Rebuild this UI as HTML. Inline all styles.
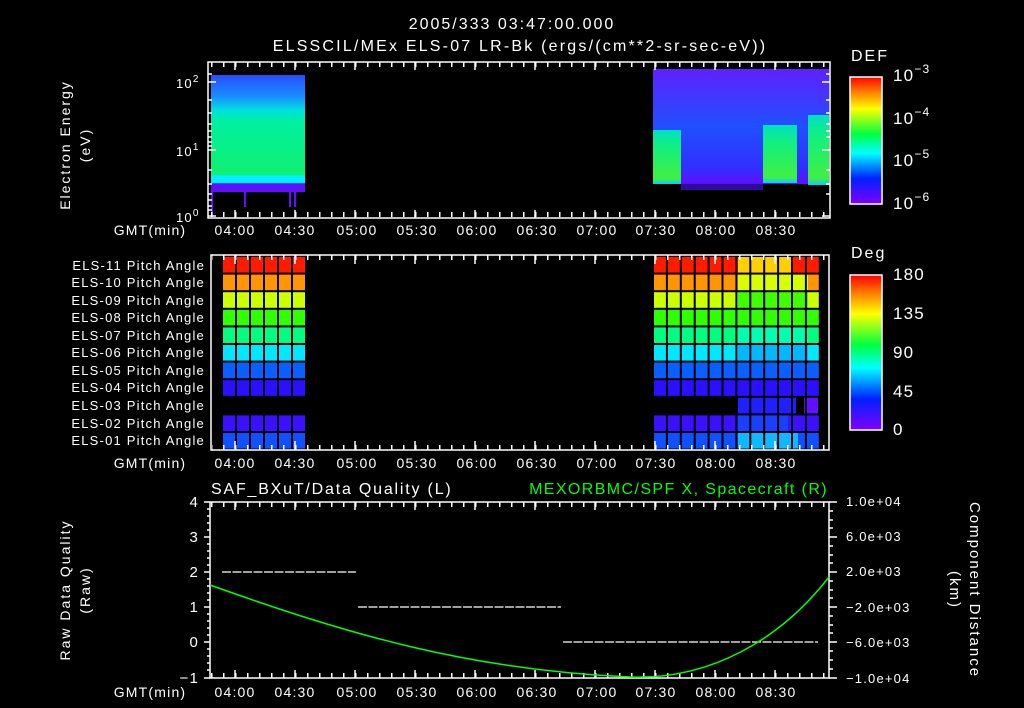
<!DOCTYPE html>
<html><head><meta charset="utf-8"><style>
html,body{margin:0;padding:0;background:#000;width:1024px;height:708px;overflow:hidden}
svg{display:block}
text{font-family:"Liberation Sans","DejaVu Sans",sans-serif;fill:#fff;letter-spacing:1.2px}
</style></head><body>
<svg width="1024" height="708" viewBox="0 0 1024 708" xmlns="http://www.w3.org/2000/svg">
<defs>
<pattern id="mtT" patternUnits="userSpaceOnUse" x="223" y="0" width="12" height="708"><rect x="0" y="0" width="1.5" height="708" fill="#fff"/></pattern>
<pattern id="grid" patternUnits="userSpaceOnUse" x="222" y="256" width="14" height="17.6"><rect width="14" height="17.6" fill="none" stroke="#000" stroke-width="2"/></pattern>
<pattern id="grid2" patternUnits="userSpaceOnUse" x="653" y="256" width="13.9" height="17.6"><rect width="13.9" height="17.6" fill="none" stroke="#000" stroke-width="2"/></pattern>
<linearGradient id="defbar" x1="0" y1="1" x2="0" y2="0">
<stop offset="0" stop-color="#8000ff"/><stop offset="0.2" stop-color="#0020ff"/><stop offset="0.4" stop-color="#00ffff"/><stop offset="0.55" stop-color="#00ff40"/><stop offset="0.75" stop-color="#ffff00"/><stop offset="0.88" stop-color="#ff8000"/><stop offset="1" stop-color="#ff0000"/></linearGradient>
<linearGradient id="lblock" x1="0" y1="0" x2="0" y2="1">
<stop offset="0" stop-color="#2a4cff"/><stop offset="0.18" stop-color="#1a8cff"/><stop offset="0.3" stop-color="#00e0e0"/><stop offset="0.4" stop-color="#00f0a0"/><stop offset="0.85" stop-color="#10f070"/><stop offset="0.86" stop-color="#00f0ff"/><stop offset="0.92" stop-color="#00f0ff"/><stop offset="0.93" stop-color="#6010ff"/><stop offset="1" stop-color="#6010ff"/></linearGradient>
<linearGradient id="rblock" x1="0" y1="0" x2="0" y2="1">
<stop offset="0" stop-color="#6020ff"/><stop offset="0.5" stop-color="#2050ff"/><stop offset="0.85" stop-color="#3030ff"/><stop offset="1" stop-color="#6010ff"/></linearGradient>
<linearGradient id="gchunk" x1="0" y1="0" x2="0" y2="1">
<stop offset="0" stop-color="#00e0c0"/><stop offset="0.3" stop-color="#10f080"/><stop offset="0.9" stop-color="#40f040"/><stop offset="1" stop-color="#00d0ff"/></linearGradient>
</defs>

<!-- Titles -->
<text x="512" y="29" font-size="16" text-anchor="middle" style="letter-spacing:2px">2005/333 03:47:00.000</text>
<text x="520" y="51" font-size="16" text-anchor="middle" style="letter-spacing:2.2px">ELSSCIL/MEx ELS-07 LR-Bk  (ergs/(cm**2-sr-sec-eV))</text>

<!-- Panel 1 -->
<rect x="211" y="75" width="94" height="117" fill="url(#lblock)"/>
<rect x="211" y="192" width="2" height="25" fill="#6010ff"/>
<rect x="244" y="192" width="2" height="15" fill="#6010ff"/>
<rect x="289" y="192" width="2" height="15" fill="#6010ff"/>
<rect x="294" y="192" width="2" height="15" fill="#6010ff"/>
<rect x="653" y="69" width="176" height="115" fill="url(#rblock)"/>
<rect x="653" y="130" width="28" height="54" fill="url(#gchunk)"/>
<rect x="763" y="125" width="34" height="58" fill="url(#gchunk)"/>
<rect x="808" y="115" width="21" height="70" fill="url(#gchunk)"/>
<rect x="681" y="182" width="82" height="8" fill="#5010ff" opacity="0.6"/>
<rect x="208" y="62" width="622" height="156" fill="none" stroke="#fff" stroke-width="1.5"/>
<rect x="209" y="62" width="620" height="5" fill="url(#mtT)"/>
<rect x="209" y="212" width="620" height="5" fill="url(#mtT)"/>
<g stroke="#fff" stroke-width="1.5">
<path d="M208 82h8M208 150h8M208 216h8M830 82h-8M830 150h-8M830 216h-8M208 100h4M208 113h4M208 124h4M208 131h4M208 137h4M208 142h4M208 146h4M208 170h4M208 184h4M208 194h4M208 200h4M208 206h4M208 210h4M208 74h4M830 100h-4M830 113h-4M830 124h-4M830 131h-4M830 137h-4M830 170h-4M830 184h-4M830 194h-4M830 74h-4"/>
<path d="M235 62v8M295 62v8M355 62v8M415 62v8M475 62v8M535 62v8M595 62v8M655 62v8M715 62v8M775 62v8M235 218v-8M295 218v-8M355 218v-8M415 218v-8M475 218v-8M535 218v-8M595 218v-8M655 218v-8M715 218v-8M775 218v-8"/>
</g>
<g style="letter-spacing:0"><text x="176" y="88" font-size="13">10<tspan dy="-6" font-size="10">2</tspan></text>
<text x="176" y="156" font-size="13">10<tspan dy="-6" font-size="10">1</tspan></text>
<text x="176" y="222" font-size="13">10<tspan dy="-6" font-size="10">0</tspan></text></g>
<text transform="translate(70,145) rotate(-90)" font-size="14" text-anchor="middle" style="letter-spacing:2px">Electron Energy</text>
<text transform="translate(90,145) rotate(-90)" font-size="14" text-anchor="middle" style="letter-spacing:2px">(eV)</text>
<g font-size="14" text-anchor="middle" style="letter-spacing:2px">
<text x="150" y="235">GMT(min)</text>
<text x="235" y="235">04:00</text><text x="295" y="235">04:30</text><text x="357" y="235">05:00</text><text x="417" y="235">05:30</text><text x="477" y="235">06:00</text><text x="537" y="235">06:30</text><text x="597" y="235">07:00</text><text x="656" y="235">07:30</text><text x="716" y="235">08:00</text><text x="776" y="235">08:30</text>
</g>
<!-- DEF colorbar -->
<text x="851" y="61" font-size="16" style="letter-spacing:2px">DEF</text>
<rect x="850" y="77" width="32" height="127" fill="url(#defbar)" stroke="#fff" stroke-width="1.5"/>
<g font-size="17" style="letter-spacing:0"><text x="893" y="81">10<tspan dy="-8" font-size="12">−3</tspan></text><text x="893" y="124">10<tspan dy="-8" font-size="12">−4</tspan></text><text x="893" y="166">10<tspan dy="-8" font-size="12">−5</tspan></text><text x="893" y="209">10<tspan dy="-8" font-size="12">−6</tspan></text></g>

<!-- Panel 2 -->
<g>
<rect x="222" y="256" width="84" height="17.6" fill="#ff1a00"/>
<rect x="222" y="273.6" width="84" height="17.6" fill="#ff9500"/>
<rect x="222" y="291.2" width="84" height="17.6" fill="#ccff00"/>
<rect x="222" y="308.8" width="84" height="17.6" fill="#30ff00"/>
<rect x="222" y="326.4" width="84" height="17.6" fill="#00ff80"/>
<rect x="222" y="344" width="84" height="17.6" fill="#00e8ff"/>
<rect x="222" y="361.6" width="84" height="17.6" fill="#0a60ff"/>
<rect x="222" y="379.2" width="84" height="17.6" fill="#2a10ff"/>
<rect x="222" y="414.4" width="84" height="17.6" fill="#3a10ff"/>
<rect x="222" y="432" width="84" height="17.6" fill="#1050ff"/>
<rect x="222" y="256" width="84" height="194" fill="url(#grid)"/>
</g>
<g>
<rect x="653" y="256" width="166" height="17.6" fill="#ff1a00"/>
<rect x="738" y="256" width="55" height="17.6" fill="#ffd000"/>
<rect x="653" y="273.6" width="166" height="17.6" fill="#ff9500"/>
<rect x="738" y="273.6" width="70" height="17.6" fill="#d8ff00"/>
<rect x="653" y="291.2" width="166" height="17.6" fill="#ccff00"/>
<rect x="738" y="291.2" width="70" height="17.6" fill="#40ff00"/>
<rect x="653" y="308.8" width="166" height="17.6" fill="#30ff00"/>
<rect x="653" y="326.4" width="166" height="17.6" fill="#00ff80"/>
<rect x="738" y="326.4" width="70" height="17.6" fill="#00ffb0"/>
<rect x="653" y="344" width="166" height="17.6" fill="#00e8ff"/>
<rect x="738" y="344" width="70" height="17.6" fill="#00b8ff"/>
<rect x="653" y="361.6" width="166" height="17.6" fill="#0a60ff"/>
<rect x="653" y="379.2" width="166" height="17.6" fill="#2a10ff"/>
<rect x="738" y="396.8" width="58" height="17.6" fill="#2020ff"/>
<rect x="804" y="396.8" width="14" height="17.6" fill="#6010ff"/>
<rect x="653" y="414.4" width="166" height="17.6" fill="#3a10ff"/>
<rect x="738" y="414.4" width="50" height="17.6" fill="#1a40ff"/>
<rect x="653" y="432" width="166" height="17.6" fill="#1050ff"/>
<rect x="738" y="432" width="60" height="17.6" fill="#10b8ff"/>
<rect x="653" y="256" width="166" height="194" fill="url(#grid2)"/>
</g>
<rect x="211" y="255" width="618" height="195" fill="none" stroke="#fff" stroke-width="1.5"/>
<rect x="212" y="255" width="616" height="5" fill="url(#mtT)"/>
<rect x="212" y="445" width="616" height="5" fill="url(#mtT)"/>
<g stroke="#fff" stroke-width="1.5"><path d="M235 255v9M295 255v9M355 255v9M415 255v9M475 255v9M535 255v9M595 255v9M655 255v9M715 255v9M775 255v9M235 450v-9M295 450v-9M355 450v-9M415 450v-9M475 450v-9M535 450v-9M595 450v-9M655 450v-9M715 450v-9M775 450v-9"/></g>
<g font-size="13" text-anchor="end" style="letter-spacing:1.6px">
<text x="205" y="270">ELS-11 Pitch Angle</text><text x="205" y="287">ELS-10 Pitch Angle</text><text x="205" y="305">ELS-09 Pitch Angle</text><text x="205" y="322">ELS-08 Pitch Angle</text><text x="205" y="340">ELS-07 Pitch Angle</text><text x="205" y="357">ELS-06 Pitch Angle</text><text x="205" y="375">ELS-05 Pitch Angle</text><text x="205" y="392">ELS-04 Pitch Angle</text><text x="205" y="410">ELS-03 Pitch Angle</text><text x="205" y="428">ELS-02 Pitch Angle</text><text x="205" y="445">ELS-01 Pitch Angle</text>
</g>
<g font-size="14" text-anchor="middle" style="letter-spacing:2px">
<text x="150" y="468">GMT(min)</text>
<text x="235" y="468">04:00</text><text x="295" y="468">04:30</text><text x="357" y="468">05:00</text><text x="417" y="468">05:30</text><text x="477" y="468">06:00</text><text x="537" y="468">06:30</text><text x="597" y="468">07:00</text><text x="656" y="468">07:30</text><text x="716" y="468">08:00</text><text x="776" y="468">08:30</text>
</g>
<text x="851" y="258" font-size="16" style="letter-spacing:2px">Deg</text>
<rect x="850" y="275" width="32" height="155" fill="url(#defbar)" stroke="#fff" stroke-width="1.5"/>
<g font-size="17" style="letter-spacing:1.5px"><text x="893" y="280">180</text><text x="893" y="319">135</text><text x="893" y="358">90</text><text x="893" y="397">45</text><text x="893" y="435">0</text></g>

<!-- Panel 3 -->
<text x="211" y="494" font-size="16" style="letter-spacing:1.8px">SAF_BXuT/Data Quality (L)</text>
<text x="828" y="494" font-size="16" text-anchor="end" style="fill:#00ff00;letter-spacing:1.4px">MEXORBMC/SPF X, Spacecraft (R)</text>
<rect x="210" y="502" width="619" height="176" fill="none" stroke="#fff" stroke-width="1.5"/>
<rect x="211" y="502" width="617" height="5" fill="url(#mtT)"/>
<rect x="211" y="673" width="617" height="5" fill="url(#mtT)"/>
<g stroke="#fff" stroke-width="1.5"><path d="M235 502v8M295 502v8M355 502v8M415 502v8M475 502v8M535 502v8M595 502v8M655 502v8M715 502v8M775 502v8M235 678v-8M295 678v-8M355 678v-8M415 678v-8M475 678v-8M535 678v-8M595 678v-8M655 678v-8M715 678v-8M775 678v-8
M210 502h-6M210 537h-6M210 572h-6M210 607h-6M210 642h-6M210 678h-6M210 509h-3M210 516h-3M210 523h-3M210 530h-3M210 544h-3M210 551h-3M210 558h-3M210 565h-3M210 579h-3M210 586h-3M210 593h-3M210 600h-3M210 614h-3M210 621h-3M210 628h-3M210 635h-3M210 649h-3M210 656h-3M210 663h-3M210 670h-3
M829 502h8M829 537h8M829 572h8M829 607h8M829 642h8M829 678h8M829 511h4M829 520h4M829 528h4M829 546h4M829 555h4M829 563h4M829 581h4M829 590h4M829 598h4M829 616h4M829 625h4M829 633h4M829 651h4M829 660h4M829 669h4"/></g>
<g stroke="#fff" stroke-width="1.2" stroke-dasharray="9,1.5">
<path d="M222 572H356M358 607H561M563 642H818"/></g>
<path d="M210 585 C 350 635, 470 670, 630 677 C 710 680, 780 640, 829 577" fill="none" stroke="#00ff00" stroke-width="1.5"/>
<g font-size="15" text-anchor="end"><text x="199" y="507">4</text><text x="199" y="542">3</text><text x="199" y="577">2</text><text x="199" y="612">1</text><text x="199" y="647">0</text><text x="199" y="683">−1</text></g>
<g font-size="13" style="letter-spacing:1.3px"><text x="846" y="506">1.0e+04</text><text x="846" y="541">6.0e+03</text><text x="846" y="576">2.0e+03</text><text x="846" y="612">−2.0e+03</text><text x="846" y="647">−6.0e+03</text><text x="846" y="683">−1.0e+04</text></g>
<text transform="translate(70,590) rotate(-90)" font-size="14" text-anchor="middle" style="letter-spacing:2px">Raw Data Quality</text>
<text transform="translate(90,590) rotate(-90)" font-size="14" text-anchor="middle" style="letter-spacing:2px">(Raw)</text>
<text transform="translate(970,590) rotate(90)" font-size="15" text-anchor="middle" style="letter-spacing:2px">Component Distance</text>
<text transform="translate(950,590) rotate(90)" font-size="15" text-anchor="middle" style="letter-spacing:2px">(km)</text>
<g font-size="14" text-anchor="middle" style="letter-spacing:2px">
<text x="150" y="697">GMT(min)</text>
<text x="235" y="697">04:00</text><text x="295" y="697">04:30</text><text x="357" y="697">05:00</text><text x="417" y="697">05:30</text><text x="477" y="697">06:00</text><text x="537" y="697">06:30</text><text x="597" y="697">07:00</text><text x="656" y="697">07:30</text><text x="716" y="697">08:00</text><text x="776" y="697">08:30</text>
</g>
</svg>
</body></html>
